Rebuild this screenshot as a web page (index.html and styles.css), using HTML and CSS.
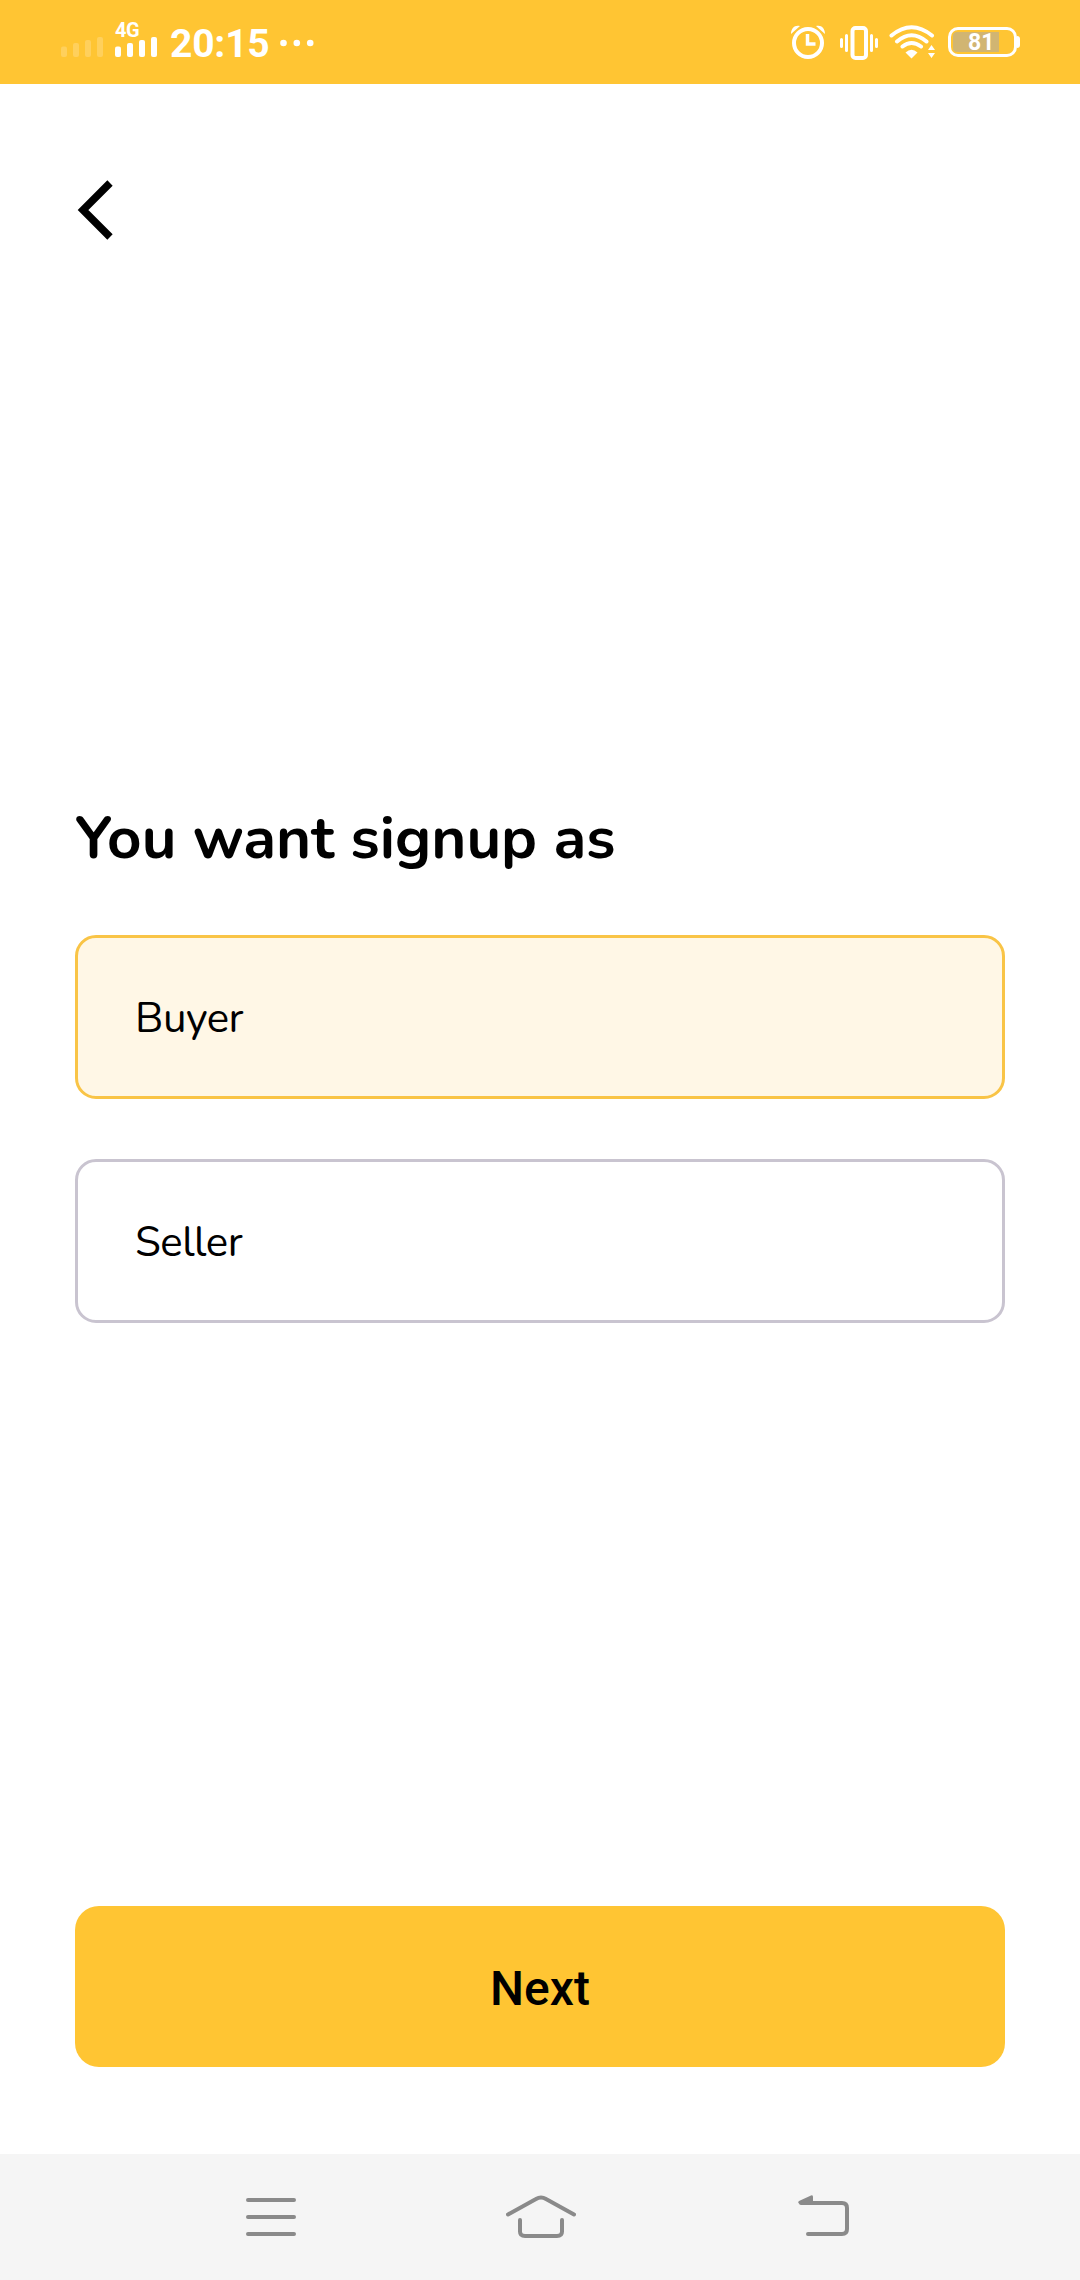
FILE: index.html
```html
<!DOCTYPE html>
<html lang="en">
<head>
<meta charset="utf-8">
<title>Sign up</title>
<link rel="stylesheet" href="styles.css">
</head>
<body>
<div class="screen">
  <header class="status">
    <div class="status-left">
      <svg class="signal weak" width="42" height="21" viewBox="0 0 42 21" fill="currentColor"><rect y="10.500" width="6" height="10.500" rx="2"/><rect x="12" y="7" width="6" height="14" rx="2"/><rect x="24" y="4" width="6" height="17" rx="2"/><rect x="36" y="1" width="6" height="20" rx="2"/></svg>
      <div class="cell">
        <span class="network">4G</span>
        <svg class="signal" width="42" height="21" viewBox="0 0 42 21" fill="currentColor"><rect y="10.500" width="6" height="10.500" rx="2"/><rect x="12" y="7" width="6" height="14" rx="2"/><rect x="24" y="4" width="6" height="17" rx="2"/><rect x="36" y="1" width="6" height="20" rx="2"/></svg>
      </div>
      <span class="clock">20:15</span>
      <svg class="dots" width="34" height="8" viewBox="0 0 34 8" fill="currentColor"><circle cx="3.500" cy="4" r="3.300"/><circle cx="16.800" cy="4" r="3.300"/><circle cx="30.200" cy="4" r="3.300"/></svg>
    </div>
    <div class="status-right">
      <svg class="alarm" width="36" height="36" viewBox="0 0 36 36" fill="none" stroke="currentColor" stroke-width="4"><circle cx="18" cy="19" r="14"/><path d="M17.500 10v10h8" stroke-width="3.500"/><path d="M1 10C1 4 5 .5 10 2zM35 10C35 4 31 .5 26 2z" fill="currentColor" stroke="none"/></svg>
      <svg class="vibrate" width="38" height="34" viewBox="0 0 38 34" fill="none" stroke="currentColor" stroke-linecap="round"><rect x="12.500" y="2" width="13.500" height="30" rx="3" stroke-width="4"/><path d="M1.500 13.500v7M6.500 9.500v15M31.500 9.500v15M36.500 13.500v7" stroke-width="3"/></svg>
      <svg class="wifi" width="47" height="34" viewBox="0 0 47 34" fill="none" stroke="currentColor" stroke-width="4" stroke-linecap="round"><path d="M2.500 10.500Q22.500-6 43 10.500M8 16.500Q22.500 4 37.500 16.500M13.500 21.500Q22.500 14.500 32 21.500"/><path d="M16.500 27.500Q22.500 22 28.500 27.500L22.500 33.500z" fill="currentColor" stroke="none"/><path d="M42.500 20l3.500 5h-7zM42.500 33l3.500-5h-7z" fill="currentColor" stroke="none"/></svg>
      <div class="battery"><div class="level">81</div></div>
      <span class="battery-tip"></span>
    </div>
  </header>
  <main class="content">
    <button class="back" aria-label="Back"><svg width="36" height="60" viewBox="0 0 36 60" fill="none" stroke="#000" stroke-width="7.500"><path d="M33 3L6 30l27 27"/></svg></button>
    <section class="choices">
      <h1 class="title">You want signup as</h1>
      <button class="option selected">Buyer</button>
      <button class="option">Seller</button>
    </section>
    <button class="next">Next</button>
  </main>
  <nav class="nav">
    <svg width="50" height="44" viewBox="0 0 50 44"><path d="M2 5h46M2 22h46M2 39h46"/></svg>
    <svg width="70" height="44" viewBox="0 0 70 44"><path d="M2 19.500L30 4Q35 1 40 4L68 19.500M14 25v11.500Q14 41 19 41H51Q56 41 56 36.500V25"/></svg>
    <svg width="52" height="44" viewBox="0 0 52 44"><path d="M3 8H44Q49 8 49 13V34Q49 39 44 39H10"/><path class="arrow" d="M1 6L13 .5Q15-.5 15 2V9H2Q-1 8 1 6z"/></svg>
  </nav>
</div>
</body>
</html>
```
FILE: styles.css
```css
* { box-sizing: border-box; }
body { margin: 0; background: #fff; }
svg { display: block; flex: none; }
button { font: inherit; color: inherit; border: 0; background: none; padding: 0; text-align: left; }

.screen {
  width: 1080px;
  height: 2280px;
  display: flex;
  flex-direction: column;
  color: #000;
  font-family: Nunito, Lato, sans-serif;
}

.status {
  height: 84px;
  flex: none;
  display: flex;
  justify-content: space-between;
  background: #ffc533;
  color: #fff;
  font-family: Roboto, sans-serif;
  font-weight: 700;
}
.status-left { display: flex; align-items: flex-start; padding-left: 61px; }
.weak { opacity: .2; margin-top: 36px; }
.cell { margin: 20px 0 0 12px; width: 43px; }
.network { display: block; height: 16px; line-height: 20px; font-size: 20px; letter-spacing: -.5px; }
.clock { margin: 21px 0 0 12px; width: 98px; font-size: 39px; line-height: 46px; letter-spacing: -.2px; }
.dots { margin: 39px 0 0 12px; }

.status-right { display: flex; align-items: flex-start; padding-right: 60px; }
.alarm { margin-top: 24px; }
.vibrate { margin: 26px 0 0 14px; }
.wifi { margin: 25px 0 0 11px; }
.battery {
  width: 69px;
  height: 30px;
  margin: 27px 0 0 12px;
  padding: 2px;
  border: 3px solid #fff;
  border-radius: 10px;
}
.level {
  width: 46px;
  height: 20px;
  padding-left: 15px;
  border-radius: 4px 0 0 4px;
  background: #d1b572;
  font-size: 23px;
  line-height: 21px;
}
.battery-tip { width: 3px; height: 12px; margin-top: 36px; border-radius: 0 3px 3px 0; background: #fff; }

.content { flex: 1; display: flex; flex-direction: column; padding: 96px 75px 87px; }
.back { width: 36px; height: 60px; margin-left: 2px; }
.choices { flex: 1; display: flex; flex-direction: column; padding-top: 561px; }
.title {
  margin: 0 0 59px;
  height: 75px;
  font-size: 60px;
  line-height: 75px;
  font-weight: 700;
  white-space: nowrap;
}
.option {
  height: 164px;
  margin-bottom: 60px;
  padding: 3px 0 0 57px;
  border: 3px solid #c9c4d0;
  border-radius: 21px;
  font-size: 42px;
  font-weight: 430;
  letter-spacing: -.5px;
}
.selected { border-color: #f9c446; background: #fff7e6; }
.next {
  height: 161px;
  padding-top: 3px;
  border-radius: 24px;
  background: #ffc533;
  font-family: Roboto, sans-serif;
  font-size: 48px;
  font-weight: 500;
  text-align: center;
}

.nav {
  height: 126px;
  flex: none;
  display: flex;
  gap: 210px;
  padding: 41px 0 0 246px;
  background: #f5f5f5;
}
.nav svg:last-child { margin-left: 12px; }
.nav path { fill: none; stroke: #8a8a8a; stroke-width: 4; stroke-linecap: round; }
.nav .arrow { fill: #8a8a8a; stroke: none; }
```
